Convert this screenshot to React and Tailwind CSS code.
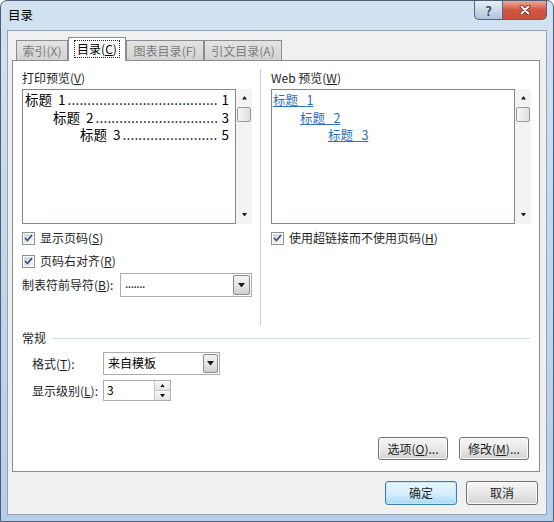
const UI = "font-['Noto_Sans_CJK_SC','Noto_Sans',sans-serif]";

function Check() {
  return (
    <span className="w-[13px] h-[13px] shrink-0 border border-[#8e8f8f] bg-white p-[1px] flex">
      <span className="flex-1 bg-linear-to-br from-[#cfd3d9] to-[#f8f8f8] flex items-center justify-center">
        <svg width="9" height="8" viewBox="0 0 9 8">
          <path d="M1 4 L3.5 6.5 L8 1" fill="none" stroke="#3d4f80" strokeWidth="1.7" />
        </svg>
      </span>
    </span>
  );
}

function Tri({ up, size = 7 }) {
  const h = Math.round(size / 2) + 0.5;
  return (
    <svg width={size} height={h} viewBox={`0 0 ${size} ${h}`}>
      <path
        d={up ? `M0 ${h} L${size / 2} 0 L${size} ${h}Z` : `M0 0 L${size} 0 L${size / 2} ${h}Z`}
        fill="#1a1a1a"
      />
    </svg>
  );
}

function ScrollBar() {
  return (
    <div className="w-[16px] shrink-0 bg-[#f3f3f3] flex flex-col items-center justify-between pt-[7px] pb-[8px]">
      <div className="flex flex-col items-center">
        <Tri up size={5} />
        <div className="mt-[7px] w-[14px] h-[15px] border border-[#9a9a9a] rounded-[2px] bg-linear-to-r from-[#f7f7f7] to-[#dedede]" />
      </div>
      <Tri size={5} />
    </div>
  );
}

function DropBtn({ w = "w-[17px]" }) {
  return (
    <div className={`${w} m-px border border-[#8a8a8a] rounded-[2px] bg-linear-to-b from-[#f4f4f4] via-[#e6e6e6] to-[#cfcfcf] flex items-center justify-center`}>
      <Tri size={7} />
    </div>
  );
}

function Button({ children, focus, w = "w-[70px]", h = "h-[23px]" }) {
  return (
    <div
      className={`${w} ${h} rounded-[3px] border flex items-center justify-center ${
        focus
          ? "border-[#3c7fb1] bg-linear-to-b from-[#eaf6fd] via-[#d9f0fc] to-[#a7d9f5] shadow-[inset_0_0_0_1px_#c6e6f8]"
          : "border-[#707070] bg-linear-to-b from-[#f6f6f6] via-[#e8e8e8] to-[#d3d3d3] shadow-[inset_0_0_0_1px_#fbfbfb]"
      }`}
    >
      {children}
    </div>
  );
}

function Tab({ label, k, w }) {
  return (
    <div className={`${w} h-[20px] border border-b-0 border-[#898c95] bg-linear-to-b from-[#e4e4e4] to-[#d2d2d2] text-[#7c7c7c] flex items-center justify-center leading-[16px]`}>
      {label}({k})
    </div>
  );
}

// dot leaders are counted per line so they stop just short of the page number
function TocLine({ n, page, dots, indent }) {
  return (
    <div className={`flex items-baseline justify-between h-[17.5px] leading-[17.5px] pr-[6px] ${indent}`}>
      <span className="whitespace-nowrap">
        标题{"\u00a0\u00a0"}{n}
        <span className="pl-[2px] tracking-[0.2px]">{".".repeat(dots)}</span>
      </span>
      <span>{page}</span>
    </div>
  );
}

function WebLine({ n, indent }) {
  return (
    <div className={`h-[17.5px] leading-[17.5px] ${indent}`}>
      <span className="underline text-[#2f6fc4] decoration-[#2f6fc4]">标题{"\u00a0\u00a0\u00a0"}{n}</span>
    </div>
  );
}

export default function App() {
  return (
    <div
      className={`${UI} w-[554px] h-[522px] flex flex-col rounded-t-[7px] border border-[#4c5d74] bg-linear-to-b from-[#d3e2f1] via-[#c3d7ec] to-[#b6cee9] text-[12px] text-[#1e1e1e]`}
    >
      <div className="h-[29px] flex justify-between items-start">
        <div className="pl-[7px] pt-[5px] leading-[18px] text-[12.5px] text-black">目录</div>
        <div className="flex mr-[6px]">
          <div className="w-[28px] h-[19px] border border-t-0 border-r-0 border-[#55677f] rounded-bl-[5px] bg-linear-to-b from-[#e6eef7] via-[#cbd9e9] to-[#aec3dc] flex items-center justify-center text-[13px] font-bold text-[#3b4a62] leading-none [text-shadow:0_0_2px_#fff]">
            ?
          </div>
          <div className="w-[45px] h-[19px] border border-t-0 border-[#55677f] rounded-br-[5px] bg-linear-to-b from-[#e9a99a] via-[#d2553f] to-[#c9503b] flex items-center justify-center">
            <svg width="12" height="10" viewBox="0 0 12 10">
              <path d="M2.5 1.5 L9.5 8.5 M9.5 1.5 L2.5 8.5" stroke="#6b2a22" strokeWidth="3.6" strokeLinecap="round" />
              <path d="M2.5 1.5 L9.5 8.5 M9.5 1.5 L2.5 8.5" stroke="#fff" strokeWidth="2" strokeLinecap="round" />
            </svg>
          </div>
        </div>
      </div>

      <div className="mx-[6px] mb-[6px] flex-1 border border-[#8fa3bd] bg-[#f0f0f0] flex flex-col">
        <div className="pl-[4px] pr-[6px]">
          <div className="flex items-end h-[29px] pl-[4px]">
            <Tab label="索引" k="X" w="w-[52px]" />
            <div className="relative z-10 -mb-px w-[58px] h-[24px] bg-white border border-b-0 border-[#898c95] flex justify-center pt-[2px]">
              <span className="h-[18px] border border-dotted border-[#222] px-[2px] leading-[16px] text-black">
                目录(<u>C</u>)
              </span>
            </div>
            <Tab label="图表目录" k="F" w="w-[78px]" />
            <Tab label="引文目录" k="A" w="w-[78px]" />
          </div>

          <div className="h-[412px] border border-[#898c95] bg-white flex flex-col">
            <div className="flex pt-[8px]">
              <div className="w-[248px] shrink-0 h-[256px] border-r border-[#cfcfcf] pl-[9px] pr-[8px] flex flex-col">
                <div className="h-[18px] leading-[18px]">
                  打印预览(<u>V</u>)
                </div>
                <div className="mt-[2px] h-[135px] flex">
                  <div className="min-w-0 flex-1 border border-[#828790] bg-white pt-px pl-[2px] text-[13.5px] text-black">
                    <TocLine n="1" page="1" dots={38} indent="" />
                    <TocLine n="2" page="3" dots={31} indent="pl-[28px]" />
                    <TocLine n="3" page="5" dots={24} indent="pl-[55px]" />
                  </div>
                  <ScrollBar />
                </div>
                <div className="mt-[5px] h-[18px] flex items-center gap-[5px]">
                  <Check />
                  <span>
                    显示页码(<u>S</u>)
                  </span>
                </div>
                <div className="mt-[5px] h-[18px] flex items-center gap-[5px]">
                  <Check />
                  <span>
                    页码右对齐(<u>R</u>)
                  </span>
                </div>
                <div className="mt-[3px] h-[24px] flex items-center">
                  <span className="w-[98px]">
                    制表符前导符(<u>B</u>):
                  </span>
                  <div className="flex-1 h-[24px] border border-[#abadb3] bg-white flex">
                    <div className="flex-1 pl-[4px] leading-[18px] tracking-[-0.5px]">.......</div>
                    <DropBtn />
                  </div>
                </div>
              </div>

              <div className="pl-[10px] flex flex-col">
                <div className="h-[18px] leading-[18px]">
                  Web 预览(<u>W</u>)
                </div>
                <div className="mt-[2px] h-[135px] w-[260px] flex">
                  <div className="min-w-0 flex-1 border border-[#828790] bg-white pt-px pl-px text-[12.5px]">
                    <WebLine n="1" indent="" />
                    <WebLine n="2" indent="pl-[27px]" />
                    <WebLine n="3" indent="pl-[55px]" />
                  </div>
                  <ScrollBar />
                </div>
                <div className="mt-[5px] h-[18px] flex items-center gap-[5px]">
                  <Check />
                  <span>
                    使用超链接而不使用页码(<u>H</u>)
                  </span>
                </div>
              </div>
            </div>

            <div className="mt-[4px] h-[18px] flex items-center pl-[9px] pr-[9px]">
              <span>常规</span>
              <div className="flex-1 h-px ml-[6px] bg-[#d5dfe5]" />
            </div>

            <div className="mt-[5px] h-[23px] flex items-center pl-[19px]">
              <span className="w-[71px]">
                格式(<u>T</u>):
              </span>
              <div className="w-[117px] h-[23px] border border-[#abadb3] bg-white flex">
                <div className="flex-1 pl-[4px] leading-[20px] text-black">来自模板</div>
                <DropBtn w="w-[15px]" />
              </div>
            </div>

            <div className="mt-[5px] h-[21px] flex items-center pl-[19px]">
              <span className="w-[71px]">
                显示级别(<u>L</u>):
              </span>
              <div className="w-[68px] h-[21px] border border-[#abadb3] bg-white flex">
                <div className="flex-1 pl-[3px] leading-[18px] text-black">3</div>
                <div className="w-[16px] flex flex-col">
                  <div className="flex-1 border-l border-b border-[#c7c7c7] bg-linear-to-b from-[#f7f7f7] to-[#e4e4e4] flex items-center justify-center">
                    <Tri up size={5} />
                  </div>
                  <div className="flex-1 border-l border-[#c7c7c7] bg-linear-to-b from-[#f7f7f7] to-[#e4e4e4] flex items-center justify-center">
                    <Tri size={5} />
                  </div>
                </div>
              </div>
            </div>

            <div className="flex-1" />
            <div className="flex justify-end gap-[11px] pr-[10px] pb-[11px]">
              <Button>
                选项(<u>O</u>)...
              </Button>
              <Button>
                修改(<u>M</u>)...
              </Button>
            </div>
          </div>
        </div>

        <div className="mt-[9px] flex justify-end gap-[9px] pr-[8px]">
          <Button focus w="w-[72px]" h="h-[24px]">
            确定
          </Button>
          <Button w="w-[72px]" h="h-[24px]">
            取消
          </Button>
        </div>
      </div>
    </div>
  );
}
